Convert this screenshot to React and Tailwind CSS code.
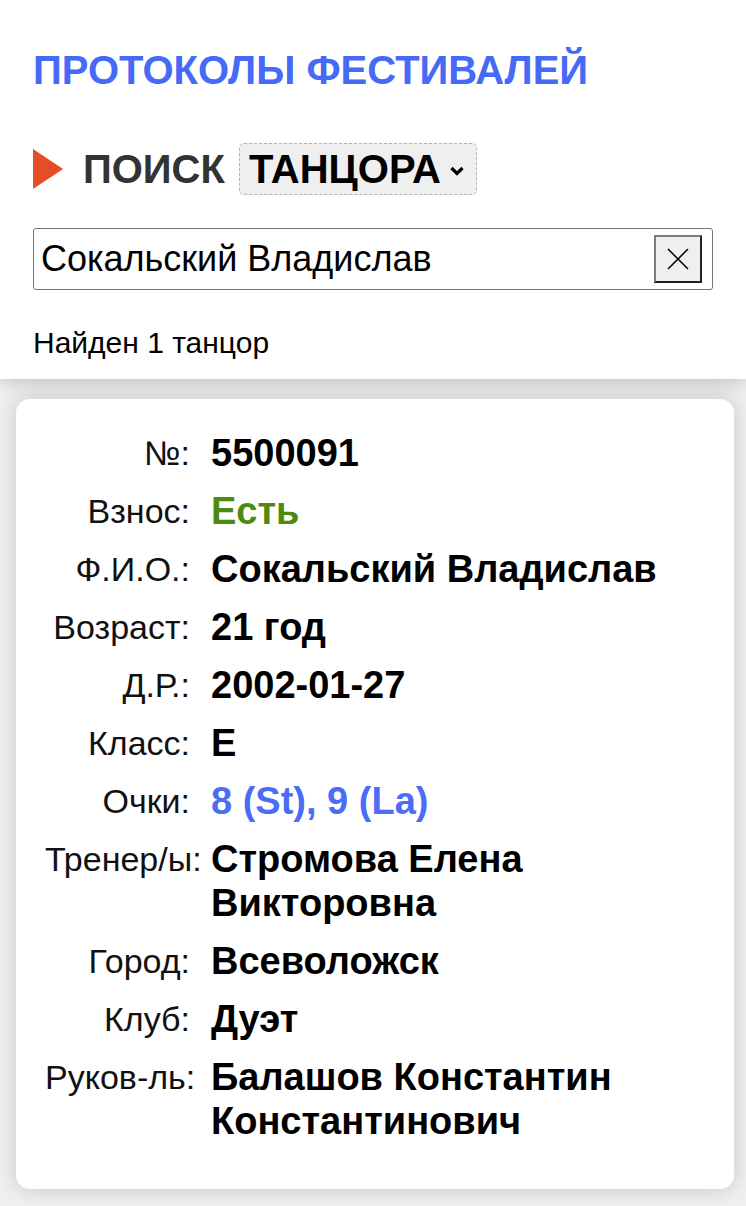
import { useState } from 'react'

const rows = [
  { label: '№:', value: '5500091' },
  { label: 'Взнос:', value: 'Есть', color: 'text-[#4e8a0e]' },
  { label: 'Ф.И.О.:', value: 'Сокальский Владислав' },
  { label: 'Возраст:', value: '21 год' },
  { label: 'Д.Р.:', value: '2002-01-27' },
  { label: 'Класс:', value: 'E' },
  { label: 'Очки:', value: '8 (St), 9 (La)', color: 'text-[#4a6cf7]' },
  { label: 'Тренер/ы:', value: 'Стромова Елена Викторовна' },
  { label: 'Город:', value: 'Всеволожск' },
  { label: 'Клуб:', value: 'Дуэт' },
  { label: 'Руков-ль:', value: 'Балашов Константин Константинович' },
]

export default function App() {
  const [query, setQuery] = useState('Сокальский Владислав')

  return (
    <div className="min-h-screen bg-[#f0f0f0] font-[family-name:Liberation_Sans,Arial,sans-serif] text-black">
      {/* Header */}
      <div className="relative z-10 bg-white px-[33px] pt-[46px] pb-[18px] shadow-[0_2px_18px_rgba(0,0,0,0.22)]">
        <h1 className="text-[40px] leading-[48px] font-bold text-[#456af6]">ПРОТОКОЛЫ ФЕСТИВАЛЕЙ</h1>

        <div className="mt-[49px] flex h-[52px] items-center">
          <span className="h-0 w-0 border-y-[20px] border-l-[30px] border-y-transparent border-l-[#e44d26]" />
          <span className="ml-[20px] text-[40px] leading-[52px] font-bold text-[#333]">ПОИСК</span>
          <div className="ml-[14px] flex h-[52px] items-center gap-[8px] rounded-[5px] border border-dashed border-[#b5b5b5] bg-[#efefef] pl-[9px] pr-[11px]">
            <span className="text-[40px] leading-[50px] font-bold">ТАНЦОРА</span>
            <svg width="16" height="12" viewBox="0 0 16 12" className="mt-[4px]">
              <path d="M2.5 3 L8 8.5 L13.5 3" fill="none" stroke="#000" strokeWidth="3.2" />
            </svg>
          </div>
        </div>

        <div className="mt-[33px] flex h-[62px] items-center rounded-[3px] border border-[#767676] pl-[7px] pr-[10px]">
          <input
            value={query}
            onChange={(e) => setQuery(e.target.value)}
            className="min-w-0 flex-1 bg-transparent font-[family-name:Liberation_Sans,Arial,sans-serif] text-[36px] outline-none"
          />
          <button className="flex h-[48px] w-[48px] shrink-0 items-center justify-center border-2 border-t-[#7a7a7a] border-l-[#7a7a7a] border-r-[#202020] border-b-[#202020] bg-[#efefef]">
            <svg width="22" height="22" viewBox="0 0 22 22">
              <path d="M1 1 L21 21 M21 1 L1 21" stroke="#000" strokeWidth="1.5" />
            </svg>
          </button>
        </div>

        <div className="mt-[35px] text-[30px] leading-[36px]">Найден 1 танцор</div>
      </div>

      {/* Result card */}
      <div className="pl-4 pr-3 pt-5 pb-5">
        <div className="rounded-[14px] bg-white pl-[29px] pr-4 pt-[32px] pb-[46px] shadow-[0_0_22px_rgba(0,0,0,0.18)]">
          <div className="grid grid-cols-[145px_1fr] gap-x-[21px] gap-y-[14px]">
            {rows.map((r, i) => (
              <div key={i} className="contents">
                <div className="whitespace-nowrap text-right text-[34px] leading-[44px] text-[#111]">{r.label}</div>
                <div className={`text-[38px] leading-[44px] font-bold ${r.color || ''}`}>{r.value}</div>
              </div>
            ))}
          </div>
        </div>
      </div>
    </div>
  )
}
